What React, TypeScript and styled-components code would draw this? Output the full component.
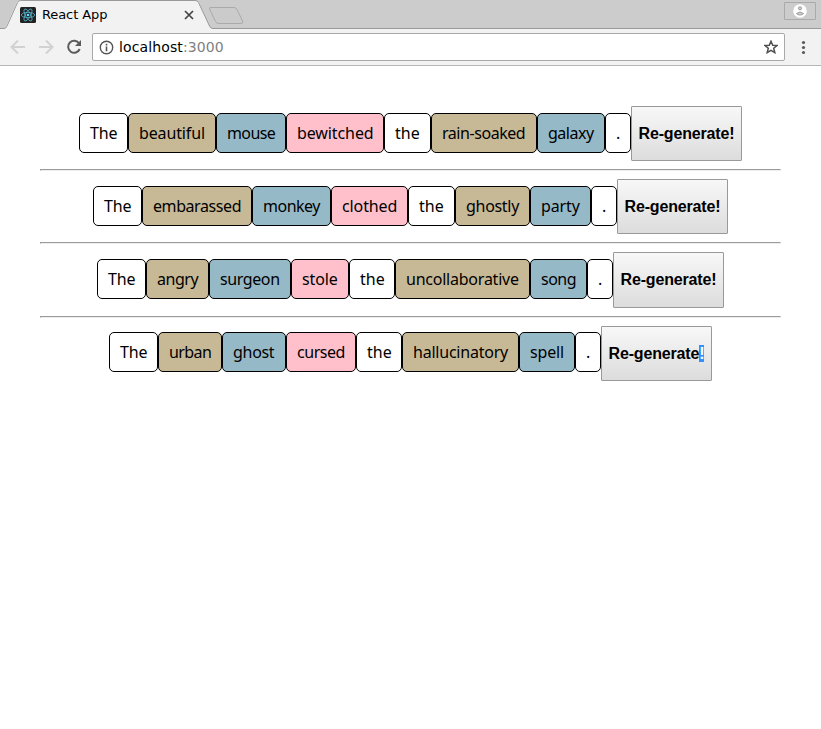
import React from "react";
import styled, { createGlobalStyle } from "styled-components";

const GlobalStyle = createGlobalStyle`
  * { box-sizing: border-box; }
  html, body { margin: 0; background: #fff; }
  body { overflow: hidden; }
`;

const Window = styled.div`
  height: 729px;
  display: flex;
  flex-direction: column;
`;

const TabStrip = styled.div`
  position: relative;
  height: 29px;
  flex: none;
  display: flex;
  align-items: flex-start;
  background: #cccccc;
`;

const StripShapes = styled.svg`
  position: absolute;
  inset: 0;
`;

const Tab = styled.div`
  position: relative;
  display: flex;
  align-items: center;
  width: 202px;
  height: 28px;
  padding: 2px 6px 0 20px;
  font: 13px "DejaVu Sans", sans-serif;
  color: #000;
`;

const TabTitle = styled.span`
  flex: 1;
  padding: 0 0 1px 6px;
  letter-spacing: -0.1px;
  white-space: nowrap;
`;

const Profile = styled.div`
  position: relative;
  width: 32px;
  height: 18px;
  margin: 2px 5px 0 auto;
  display: flex;
  align-items: center;
  justify-content: center;
  border: 1px solid #aaa;
  border-radius: 1px;
`;

const Toolbar = styled.div`
  flex: none;
  height: 37px;
  display: flex;
  align-items: flex-start;
  padding-top: 4px;
  background: #f2f2f2;
  border-bottom: 1px solid #b6b4b6;
`;

const NavIcons = styled.svg`
  flex: none;
`;

const AddressBar = styled.div`
  flex: none;
  width: 693px;
  height: 28px;
  display: flex;
  align-items: center;
  padding: 0 6px 0 6px;
  background: #fff;
  border: 1px solid #a9a9a9;
  border-radius: 2px;
  font: 14px "DejaVu Sans", sans-serif;
`;

const Url = styled.span`
  flex: 1;
  padding-left: 5px;
  letter-spacing: 0.12px;
  color: #000;
`;

const Port = styled.span`
  color: #808080;
`;

const Page = styled.main`
  padding: 40px;
`;

const Sentence = styled.div`
  display: flex;
  align-items: center;
  justify-content: center;
  height: 55.2px;
`;

const Divider = styled.hr`
  margin: 8px 0;
  border: 1px solid;
  border-color: #9a9a9a #eee #eee #9a9a9a;
`;

type Kind = "plain" | "adjective" | "noun" | "verb";

const fills: Record<Kind, string> = {
  plain: "#ffffff",
  adjective: "#c8b996",
  noun: "#96b9c8",
  verb: "#ffc0cb",
};

const Word = styled.span<{ $kind: Kind; $width: number; $spacing: number }>`
  flex: none;
  width: ${(p) => p.$width}px;
  height: 40px;
  margin-bottom: 2px;
  display: flex;
  justify-content: flex-start;
  padding-left: 10px;
  background: ${(p) => fills[p.$kind]};
  border: 1px solid #000;
  border-radius: 5px;
  font: 16px/38px "Noto Sans", sans-serif;
  letter-spacing: ${(p) => p.$spacing}px;
  white-space: nowrap;
  color: #000;
`;

const Regenerate = styled.button`
  flex: none;
  width: 111px;
  height: 55.2px;
  padding: 1px 0 0;
  border: 1px solid #999;
  border-radius: 1px;
  background: linear-gradient(#f8f8f8, #dcdcdc);
  font: bold 16px "Liberation Sans", Arial, sans-serif;
  letter-spacing: -0.16px;
  color: #000;
`;

const Selected = styled.span`
  background: #3390ff;
  color: #fff;
`;

type Item = [string, Kind, number, number];

const sentences: Item[][] = [
  [["The", "plain", 49, -0.2], ["beautiful", "adjective", 88, -0.13], ["mouse", "noun", 70, -0.6], ["bewitched", "verb", 98, -0.1], ["the", "plain", 47, 0], ["rain-soaked", "adjective", 106, -0.45], ["galaxy", "noun", 68, -0.5], [".", "plain", 26, 0]],
  [["The", "plain", 49, -0.2], ["embarassed", "adjective", 110, -0.42], ["monkey", "noun", 79, -0.5], ["clothed", "verb", 77, -0.12], ["the", "plain", 47, 0], ["ghostly", "adjective", 75, -0.3], ["party", "noun", 61, -0.1], [".", "plain", 26, 0]],
  [["The", "plain", 49, -0.2], ["angry", "adjective", 63, -0.45], ["surgeon", "noun", 82, -0.4], ["stole", "verb", 58, -0.12], ["the", "plain", 46, 0], ["uncollaborative", "adjective", 135, -0.23], ["song", "noun", 57, -0.5], [".", "plain", 26, 0]],
  [["The", "plain", 49, -0.2], ["urban", "adjective", 64, -0.6], ["ghost", "noun", 64, -0.3], ["cursed", "verb", 70, -0.45], ["the", "plain", 46, 0], ["hallucinatory", "adjective", 117, -0.22], ["spell", "noun", 56, -0.15], [".", "plain", 26, 0]],
];

export default function App() {
  return (
    <Window>
      <GlobalStyle />
      <TabStrip>
        <StripShapes width="821" height="29" fill="none">
          <path d="M0 28.5H5L17 2Q18 .5 20 .5H195Q197.500 .5 198.500 2L210 27Q211 28.500 213 28.500H821V29H0Z" fill="#f2f2f2" />
          <path d="M0 28.5H4Q6 28.500 7 26L17.500 2.500Q18.500 .5 20.500 .5H195Q197.500 .5 198.500 2.500L209.500 26Q210.500 28.500 213 28.500H821" stroke="#999" />
          <path d="M211 7.500H234Q236 7.500 237 9.500L242.500 21Q243.500 23.500 241 23.500H219Q216.500 23.500 215.500 21.500L209.500 9Q209 7.500 211 7.500Z" fill="#cbcbcb" stroke="#aaa" />
        </StripShapes>
        <Tab>
          <svg width="16" height="16" viewBox="0 0 16 16" fill="none">
            <rect width="16" height="16" rx="1.500" fill="#222" />
            <g stroke="#53b5d0" strokeWidth=".8">
              <ellipse cx="8" cy="8" rx="6.700" ry="2.600" />
              <ellipse cx="8" cy="8" rx="6.700" ry="2.600" transform="rotate(60 8 8)" />
              <ellipse cx="8" cy="8" rx="6.700" ry="2.600" transform="rotate(120 8 8)" />
            </g>
            <circle cx="8" cy="8" r="1.300" fill="#61dafb" />
          </svg>
          <TabTitle>React App</TabTitle>
          <svg width="14" height="14" stroke="#444" strokeWidth="1.700">
            <path d="M3 3L11 11M11 3L3 11" />
          </svg>
        </Tab>
        <Profile>
          <svg width="14" height="14" viewBox="0 0 14 14">
            <circle cx="7" cy="7" r="6.800" fill="#fff" />
            <circle cx="7" cy="4.300" r="1.600" fill="#ccc" stroke="#999" strokeWidth=".9" />
            <path d="M3.500 9.500Q7 6.500 10.500 9.500Q10 11 7 11T3.500 9.500Z" fill="#ccc" stroke="#999" strokeWidth=".9" />
          </svg>
        </Profile>
      </TabStrip>
      <Toolbar>
        <NavIcons width="92" height="28" fill="none">
          <path d="M25 14H12M18 7.500L11.500 14L18 20.500" stroke="#d2d2d2" strokeWidth="2" />
          <path d="M39 14H52M46 7.500L52.500 14L46 20.500" stroke="#d2d2d2" strokeWidth="2" />
          <path d="M79.200 10.500A6 6 0 1 0 79.700 16" stroke="#5a5a5a" strokeWidth="2" />
          <path d="M81 7V13H75Z" fill="#5a5a5a" />
        </NavIcons>
        <AddressBar>
          <svg width="15" height="15" fill="none" stroke="#555">
            <circle cx="7.500" cy="7.500" r="6.200" strokeWidth="1.400" />
            <path d="M7.500 6.500V11.200M7.500 3.800V5.400" strokeWidth="1.600" />
          </svg>
          <Url>localhost<Port>:3000</Port></Url>
          <svg width="14" height="14" viewBox="0 0 14 14" fill="none" stroke="#505050" strokeWidth="1.500">
            <path d="M7 1.200L8.700 5.200L13 5.500L9.700 8.300L10.800 12.600L7 10.300L3.200 12.600L4.300 8.300L1 5.500L5.300 5.200Z" />
          </svg>
        </AddressBar>
        <NavIcons width="36" height="28" fill="#5a5a5a">
          <circle cx="18.500" cy="9.500" r="1.600" />
          <circle cx="18.500" cy="14.500" r="1.600" />
          <circle cx="18.500" cy="19.500" r="1.600" />
        </NavIcons>
      </Toolbar>
      <Page>
        {sentences.map((words, row) => (
          <React.Fragment key={row}>
            {row > 0 && <Divider />}
            <Sentence>
              {words.map(([text, kind, width, spacing], i) => (
                <Word key={i} $kind={kind} $width={width} $spacing={spacing}>{text}</Word>
              ))}
              <Regenerate>
                Re-generate{row === 3 ? <Selected>!</Selected> : "!"}
              </Regenerate>
            </Sentence>
          </React.Fragment>
        ))}
      </Page>
    </Window>
  );
}
